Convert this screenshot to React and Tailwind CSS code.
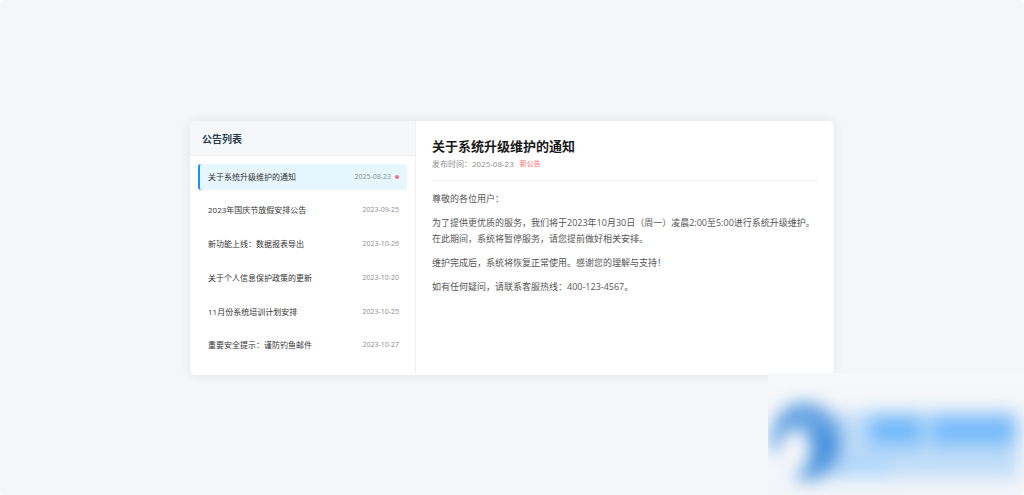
import { useState } from "react";

const notices = [
  { id: 1, title: "关于系统升级维护的通知", date: "2025-08-23", isNew: true },
  { id: 2, title: "2023年国庆节放假安排公告", date: "2023-09-25" },
  { id: 3, title: "新功能上线：数据报表导出", date: "2023-10-26" },
  { id: 4, title: "关于个人信息保护政策的更新", date: "2023-10-20" },
  { id: 5, title: "11月份系统培训计划安排", date: "2023-10-25" },
  { id: 6, title: "重要安全提示：谨防钓鱼邮件", date: "2023-10-27" },
];

const paragraphs = [
  "尊敬的各位用户：",
  "为了提供更优质的服务，我们将于2023年10月30日（周一）凌晨2:00至5:00进行系统升级维护。在此期间，系统将暂停服务，请您提前做好相关安排。",
  "维护完成后，系统将恢复正常使用。感谢您的理解与支持！",
  "如有任何疑问，请联系客服热线：400-123-4567。",
];

function NoticeItem({ notice, active, onSelect }) {
  return (
    <li>
      <button
        type="button"
        onClick={onSelect}
        aria-current={active ? "true" : undefined}
        className={
          active
            ? "flex h-[26px] w-full items-center justify-between rounded-[3px] border-l-2 border-[#1890ff] bg-[#e6f6ff] px-2 text-left"
            : "flex h-[26px] w-full items-center justify-between rounded-[3px] border-l-2 border-transparent px-2 text-left"
        }
      >
        <span className="text-[8px] leading-3 text-[#333333]">{notice.title}</span>
        <span className="flex items-center gap-1 text-[7px] leading-3 text-[#8c8c8c]">
          {notice.date}
          {notice.isNew && <span className="size-[4px] rounded-full bg-[#ff6b6b]" />}
        </span>
      </button>
    </li>
  );
}

function Watermark() {
  return (
    <div className="pointer-events-none absolute right-0 bottom-0 h-[122px] w-64 overflow-hidden bg-linear-to-b from-[#f6f8fa] to-[#f2f5fa]" aria-hidden="true">
      <svg viewBox="0 0 256 122" className="size-full">
        <defs>
          <filter id="soft" x="-20%" y="-50%" width="140%" height="200%" colorInterpolationFilters="sRGB">
            <feGaussianBlur stdDeviation="9" />
          </filter>
          <filter id="mark" x="-40%" y="-40%" width="180%" height="180%" colorInterpolationFilters="sRGB">
            <feGaussianBlur stdDeviation="8" />
          </filter>
        </defs>
        <g filter="url(#soft)">
          <rect x="58" y="40" width="192" height="64" fill="#bedcf8" />
          <rect x="62" y="84" width="60" height="18" fill="#acd5fb" />
          <rect x="102" y="41" width="52" height="31" fill="#74bafa" />
          <rect x="164" y="41" width="84" height="31" fill="#78bbfa" />
        </g>
        <g filter="url(#mark)">
          <path d="M3 77 C1 47 15 28 39 29 C61 31 76 52 74 72 C73 90 60 104 45 108 L25 107 C38 94 44 84 41 70 C38 58 31 54 23 58 C14 62 11 70 9 80 Z" fill="#6aa6e3" />
          <path d="M56 52 C70 62 71 83 56 95 L45 99 C51 85 51 67 45 57 Z" fill="#4590dc" />
        </g>
      </svg>
    </div>
  );
}

export default function App() {
  const [selected, setSelected] = useState(1);
  return (
    <div className="bg-[#fdfdfe]">
      <div className="relative flex min-h-screen items-center justify-center overflow-hidden rounded-md bg-[#f4f6fa] font-['Open_Sans','Noto_Sans_CJK_SC',sans-serif]">
        <main className="flex min-h-[254px] w-full max-w-[644px] overflow-hidden rounded-md bg-white shadow-[0_0_12px_rgba(0,0,0,0.08)]">
          <aside className="flex w-[226px] shrink-0 flex-col border-r border-[#eef0f2]">
            <header className="border-b border-[#eceff2] bg-[#f5f8fb] px-3 pt-[10px] pb-2">
              <h2 className="text-[10px] leading-4 font-bold text-[#2c3e50]">公告列表</h2>
            </header>
            <ul className="flex flex-1 flex-col justify-between px-2 pt-2 pb-4">
              {notices.map((notice) => (
                <NoticeItem
                  key={notice.id}
                  notice={notice}
                  active={notice.id === selected}
                  onSelect={() => setSelected(notice.id)}
                />
              ))}
            </ul>
          </aside>
          <article className="min-w-0 flex-1 p-4">
            <header className="border-b border-[#f0f0f0] pb-2">
              <h1 className="text-[13px] leading-[18px] font-bold text-[#1a1a1a]">关于系统升级维护的通知</h1>
              <div className="flex items-center gap-1.5 text-[8px] leading-[17px] text-[#8c8c8c]">
                <span>发布时间：2025-08-23</span>
                <span className="text-[7px] text-[#ff6b6b]">新公告</span>
              </div>
            </header>
            <div className="flex flex-col gap-2 pt-[10px] text-[9px] leading-[16px] text-[#555555]">
              {paragraphs.map((text) => (
                <p key={text}>{text}</p>
              ))}
            </div>
          </article>
        </main>
        <Watermark />
      </div>
    </div>
  );
}
